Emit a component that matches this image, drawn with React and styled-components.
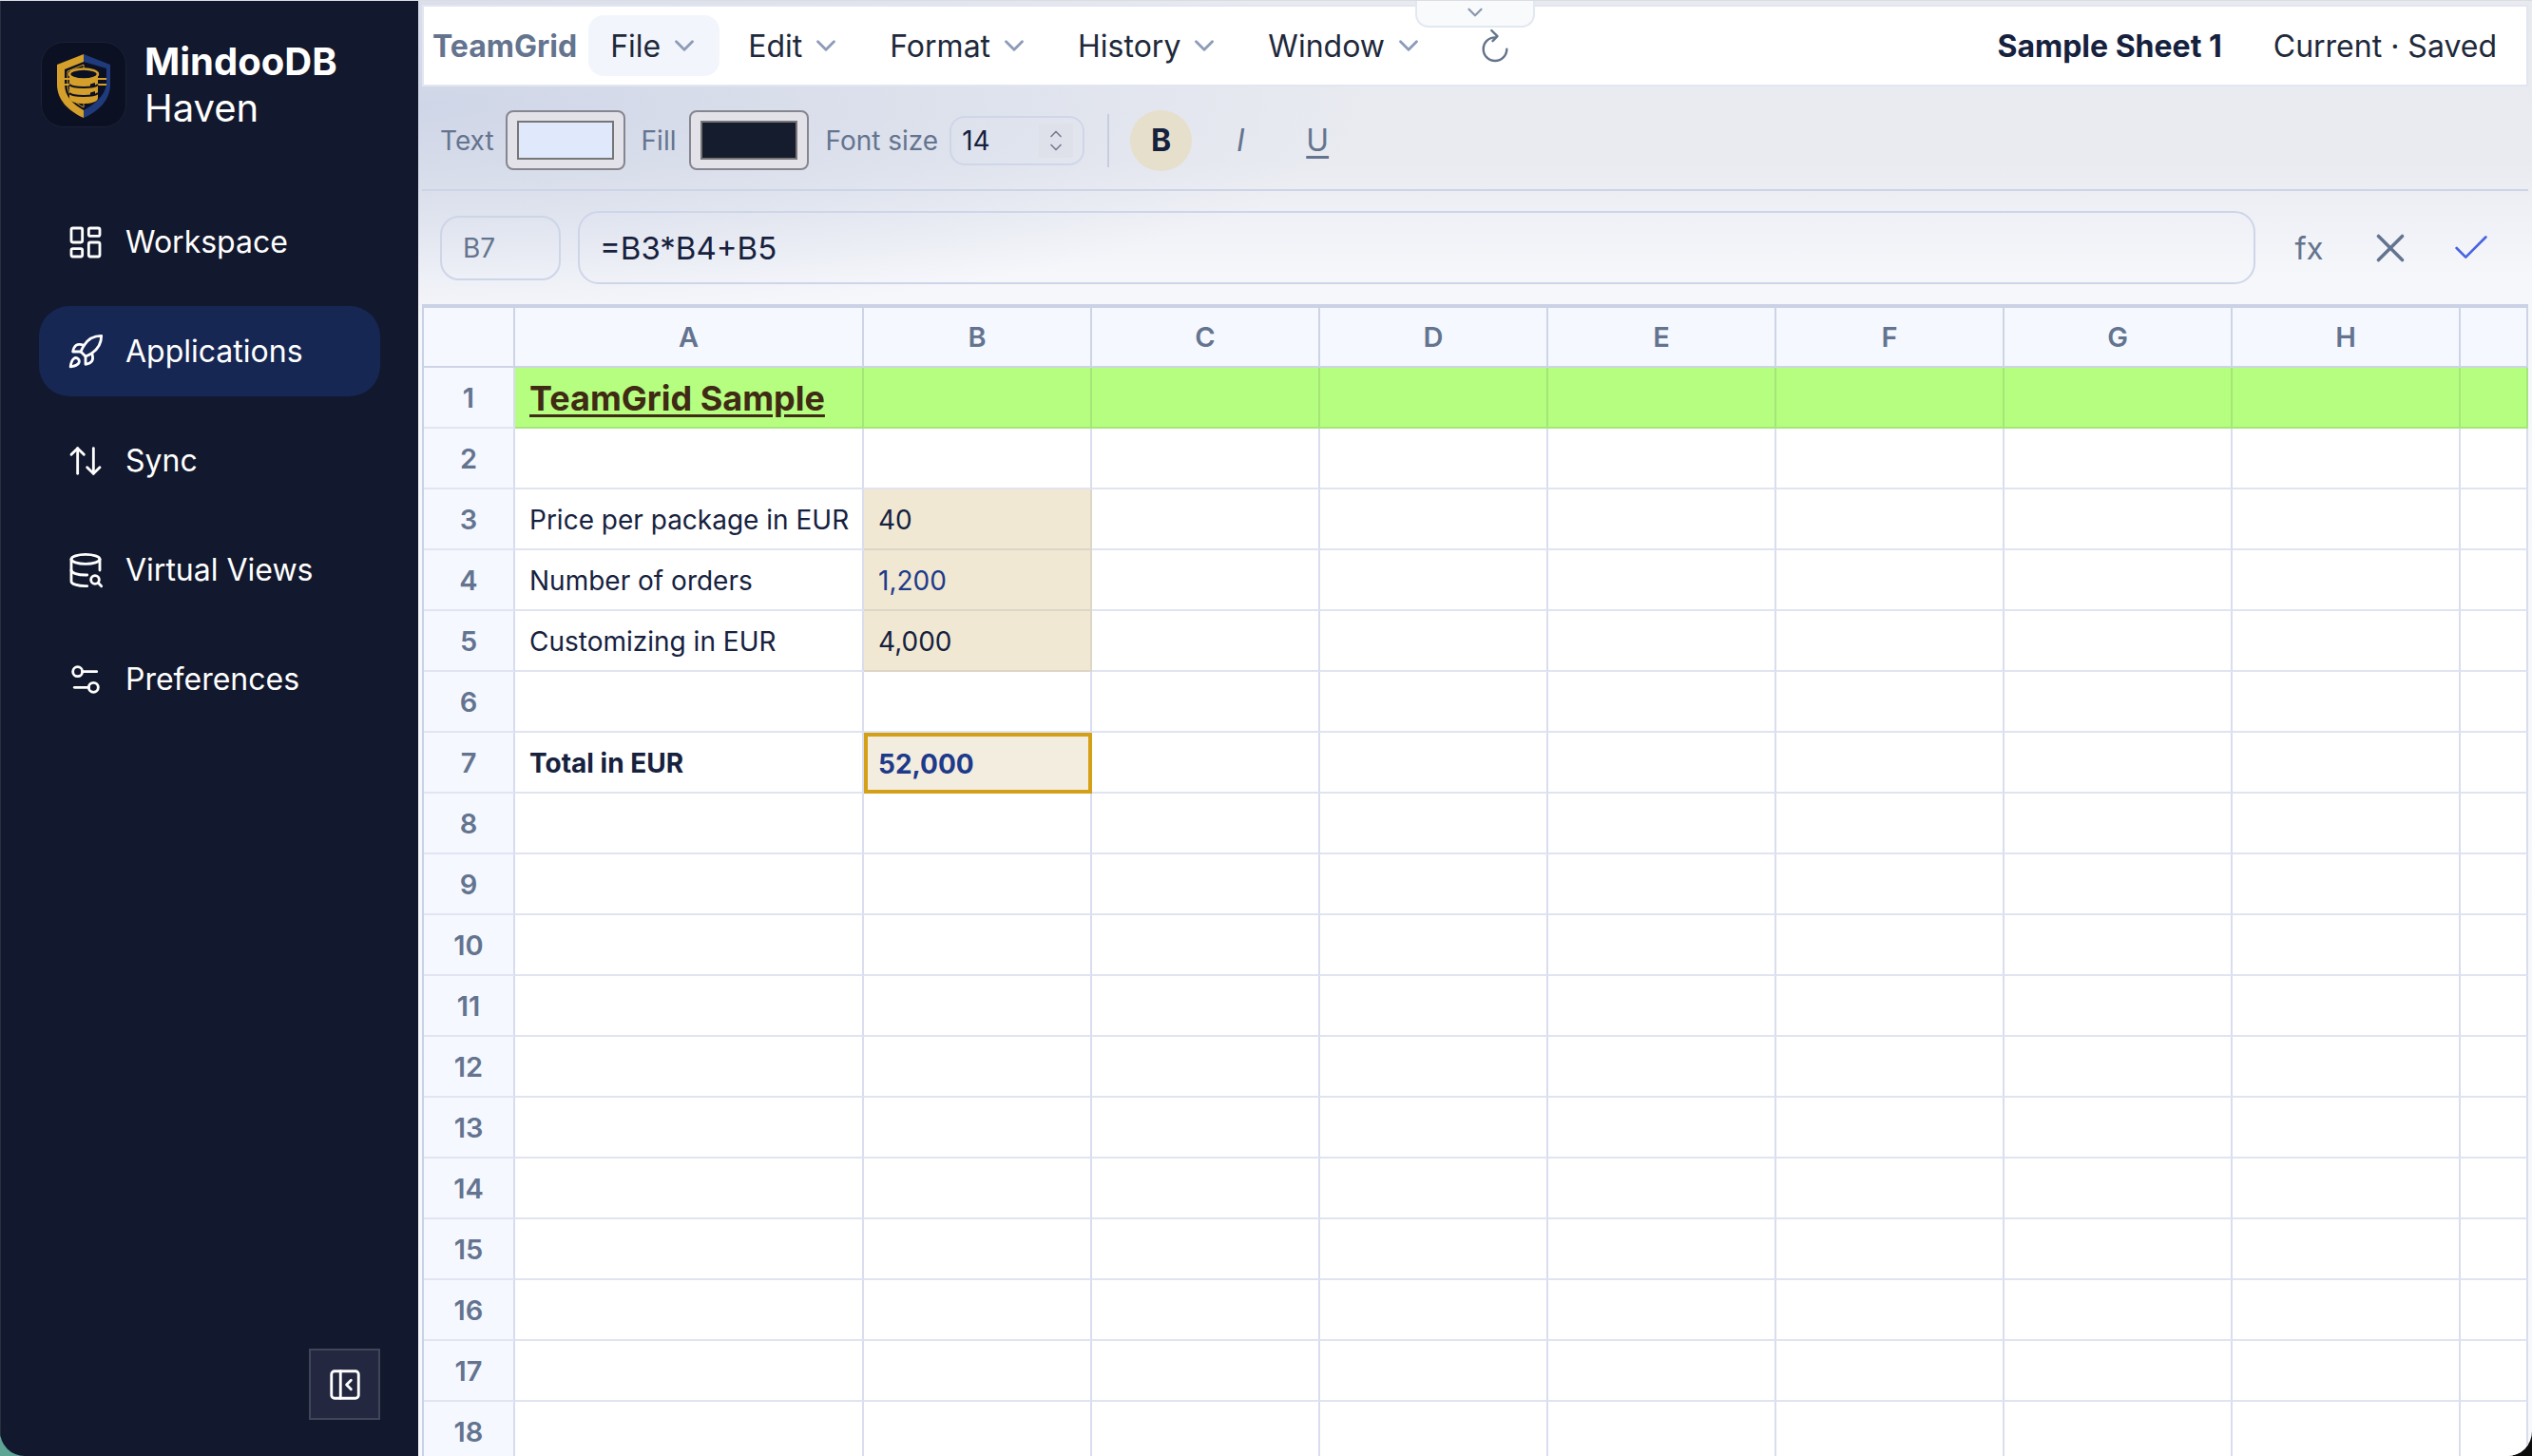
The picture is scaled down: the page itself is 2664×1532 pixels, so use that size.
import React from 'react'
import styled, { createGlobalStyle } from 'styled-components'
import {
  LayoutDashboard,
  Rocket,
  ArrowUpDown,
  Settings2,
  PanelLeftClose,
  ChevronDown,
  ChevronUp,
  X,
  Check,
} from 'lucide-react'

const GlobalStyle = createGlobalStyle`
  html, body { margin: 0; padding: 0; }
  body {
    width: 2664px;
    height: 1532px;
    overflow: hidden;
    font-family: Inter, "Noto Sans", sans-serif;
    background: linear-gradient(90deg, #5fa596 0 50%, #0c0c0c 50% 100%);
  }
  * { box-sizing: border-box; }
`

const Shell = styled.div`
  display: flex;
  width: 2664px;
  height: 1532px;
  border-top: 1px solid #dcdde3;
  border-radius: 0 0 26px 26px;
  overflow: hidden;
`

const Sidebar = styled.aside`
  display: flex;
  flex-direction: column;
  flex: 0 0 440px;
  padding: 39px 40px 38px;
  background: #12182d;
  border-left: 1px solid #2a3044;
  color: #fff;
`

const Brand = styled.div`
  display: flex;
  align-items: center;
  gap: 19px;
  margin: 0 0 69px 2px;
`

const LogoBox = styled.div`
  flex: 0 0 90px;
  width: 90px;
  height: 90px;
  border-radius: 24px;
  background: #0b1022;
  border: 1px solid #1b2136;
  svg { display: block; }
`

const BrandText = styled.div`
  display: flex;
  flex-direction: column;
  font-size: 40px;
  line-height: 49px;
  strong { font-weight: 700; }
  span { font-weight: 400; }
`

const Nav = styled.nav`
  display: flex;
  flex-direction: column;
  gap: 20px;
`

const NavItem = styled.div`
  display: flex;
  align-items: center;
  gap: 22px;
  height: 95px;
  padding-left: 29px;
  border-radius: 32px;
  font-size: 32px;
  font-weight: 400;
  background: ${(p) => (p.$active ? '#172753' : 'transparent')};
`

const CollapseButton = styled.button`
  display: flex;
  align-items: center;
  justify-content: center;
  align-self: flex-end;
  width: 75px;
  height: 75px;
  margin-top: auto;
  padding: 0;
  background: #232840;
  border: 2px solid #41455a;
  color: #fff;
`

const Main = styled.main`
  position: relative;
  display: flex;
  flex-direction: column;
  flex: 1;
  min-width: 0;
  padding: 4px 4px 0;
  background:
    radial-gradient(ellipse 1000px 230px at 0% 110px, #cfd6e7 0%, rgba(207, 214, 231, 0) 100%),
    linear-gradient(180deg, #e8eaf0 0, #e9ebf1 170px, #f6f7fb 290px, #f6f8fc 100%);
`

const DropTab = styled.div`
  position: absolute;
  top: -1px;
  left: 50%;
  display: flex;
  justify-content: center;
  width: 126px;
  height: 29px;
  transform: translateX(-50%);
  background: #f8fafc;
  border: 2px solid #e2e8f0;
  border-top: none;
  border-radius: 0 0 14px 14px;
  color: #8a97ad;
  z-index: 2;
`

const TopBar = styled.header`
  display: flex;
  align-items: center;
  flex: 0 0 86px;
  padding: 0 31px 0 9px;
  background: #fff;
  border: 2px solid #e2e6f0;
`

const AppName = styled.span`
  margin-right: 12px;
  font-size: 32px;
  font-weight: 700;
  color: #64748f;
`

const MenuButton = styled.div`
  display: flex;
  align-items: center;
  gap: 8px;
  height: 64px;
  margin-right: 7px;
  padding: 0 20px 0 23px;
  border-radius: 16px;
  font-size: 32px;
  color: #1e293b;
  background: ${(p) => (p.$open ? '#f2f5fb' : 'transparent')};
  svg { color: #8d9cb8; }
`

const ReloadButton = styled.div`
  display: flex;
  align-items: center;
  justify-content: center;
  width: 94px;
  color: #64748b;
`

const DocTitle = styled.span`
  margin-left: auto;
  font-size: 32px;
  font-weight: 700;
  color: #16213e;
`

const DocStatus = styled.span`
  margin-left: 54px;
  font-size: 32px;
  color: #1e293b;
`

const Toolbar = styled.div`
  display: flex;
  align-items: center;
  flex: 0 0 110px;
  padding: 5px 0 0 19px;
  border-bottom: 2px solid #cdd4e6;
`

const ToolLabel = styled.label`
  margin-right: ${(p) => p.$gap}px;
  font-size: 28px;
  color: #64748f;
`

const ColorInput = styled.input`
  appearance: none;
  width: 126px;
  height: 63px;
  margin: 0 17px 0 0;
  padding: 9px 10px;
  background: #e2e2e8;
  border: 2px solid #85868f;
  border-radius: 8px;
  &::-webkit-color-swatch-wrapper { padding: 0; }
  &::-webkit-color-swatch {
    border: 2px solid #767676;
    border-radius: 0;
  }
`

const SizeField = styled.div`
  display: flex;
  align-items: center;
  justify-content: space-between;
  width: 142px;
  height: 52px;
  padding: 0 10px 0 11px;
  border: 2px solid #ced6e8;
  border-radius: 16px;
  font-size: 28px;
  color: #16213e;
`

const Spinner = styled.div`
  display: flex;
  flex-direction: column;
  align-items: center;
  justify-content: center;
  width: 36px;
  height: 36px;
  background: #dfe1ea;
  color: #747c8f;
  svg { display: block; margin: -3px 0; }
`

const ToolDivider = styled.div`
  width: 2px;
  height: 56px;
  margin: 0 22px 0 24px;
  background: #c6cede;
`

const StyleButton = styled.div`
  display: flex;
  align-items: center;
  justify-content: center;
  width: ${(p) => p.$w || 65}px;
  height: 64px;
  margin-right: 17px;
  border-radius: 50%;
  font-size: 32px;
  color: #64748f;
  background: ${(p) => (p.$on ? '#e5dfcb' : 'transparent')};
  ${(p) => p.$on && 'color: #16213e; font-weight: 700;'}
  ${(p) => p.$italic && 'font-style: italic;'}
  ${(p) => p.$underline && 'text-decoration: underline; text-underline-offset: 5px;'}
`

const FormulaRow = styled.div`
  display: flex;
  align-items: center;
  flex: 0 0 119px;
  padding: 0 18px 0 19px;
`

const NameBox = styled.div`
  display: flex;
  align-items: center;
  flex: 0 0 127px;
  height: 68px;
  margin-right: 18px;
  padding-left: 22px;
  border: 2px solid #cdd5e8;
  border-radius: 20px;
  font-size: 28px;
  color: #64748f;
`

const FormulaInput = styled.div`
  display: flex;
  align-items: center;
  flex: 1;
  height: 77px;
  margin-right: 14px;
  padding-left: 21px;
  border: 2px solid #cdd5e8;
  border-radius: 22px;
  font-size: 33px;
  color: #16213e;
`

const FormulaTool = styled.div`
  display: flex;
  align-items: center;
  justify-content: center;
  flex: 0 0 85px;
  font-size: 33px;
  color: ${(p) => p.$color || '#64748f'};
`

const Sheet = styled.div`
  display: grid;
  flex: 1;
  min-height: 0;
  grid-template-columns: 96px 367px repeat(7, 240px) 1fr;
  grid-auto-rows: 64px;
  grid-template-rows: 63px;
  overflow: hidden;
  background: #fff;
  border-top: 4px solid #cbd2e6;
  border-left: 2px solid #c9d1e5;
`

const HeadCell = styled.div`
  display: flex;
  align-items: center;
  justify-content: center;
  background: #f5f8ff;
  border-right: 2px solid ${(p) => p.$strong ? '#cdd4e6' : '#d8dcee'};
  border-bottom: 2px solid ${(p) => p.$strong ? '#cdd4e6' : '#e1e5f2'};
  font-size: 29px;
  font-weight: 600;
  color: #64748f;
`

const Cell = styled.div`
  display: flex;
  align-items: center;
  min-width: 0;
  padding: 1px 0 0 15px;
  white-space: nowrap;
  font-size: 28px;
  color: ${(p) => p.$color || '#16213e'};
  font-weight: ${(p) => (p.$bold ? 700 : 400)};
  background: ${(p) => p.$fill || 'transparent'};
  border-right: 2px solid ${(p) => p.$line || '#d9ddee'};
  border-bottom: 2px solid ${(p) => p.$line || '#e0e4f1'};
`

const SelectedCell = styled(Cell)`
  padding-left: 11px;
  background: #f3ede0;
  border: 4px solid #d4a017;
`

const SheetTitle = styled.span`
  font-size: 36px;
  font-weight: 700;
  color: #3f2a14;
  text-decoration: underline;
  text-decoration-thickness: 3px;
  text-underline-offset: 4px;
`

function Logo() {
  return (
    <svg width="88" height="88" viewBox="0 0 88 88">
      <path d="M44 12 L72 23 V44 C72 60 60 72 44 79 Z" fill="#1f3b7c" />
      <path d="M44 12 L16 23 V44 C16 60 28 72 44 79 Z" fill="#d49f2a" />
      <path d="M44 20 L24 28 V44 C24 56 33 65 44 71 C55 65 66 56 68 44 V27 Z" fill="#0b1022" />
      <path d="M44 23 L27 30 V44 C27 55 34 63 44 68 Z" fill="none" stroke="#d49f2a" strokeWidth="1" />
      <path d="M24 38 H68 M24 44 H68" stroke="#d49f2a" strokeWidth="2" />
      <path d="M29 34 V58 C29 62 36 64 44 64 C52 64 59 62 59 58 V34 Z" fill="#d49f2a" />
      <ellipse cx="44" cy="33" rx="15" ry="5.5" fill="#0b1022" stroke="#d49f2a" strokeWidth="2.5" />
      <path d="M29 44 C33 48 55 48 59 44 M29 53 C33 57 55 57 59 53" fill="none" stroke="#0b1022" strokeWidth="2" />
      <path d="M51 43.5 L56 42 V45 L51 46.5 Z M51 52.5 L56 51 V54 L51 55.5 Z" fill="#0b1022" />
    </svg>
  )
}

function ReloadIcon() {
  return (
    <svg width="32" height="38" viewBox="0 0 26 30" fill="none" stroke="currentColor" strokeWidth="2" strokeLinecap="round" strokeLinejoin="round">
      <path d="M13 8 A10 10 0 1 0 23 18" />
      <path d="M10 2 L15 7 L11 11" />
    </svg>
  )
}

// lucide has no database with a loupe in this version
function DatabaseLoupe({ size, strokeWidth }) {
  return (
    <svg width={size} height={size} viewBox="0 0 24 24" fill="none" stroke="currentColor" strokeWidth={strokeWidth} strokeLinecap="round" strokeLinejoin="round">
      <ellipse cx="12" cy="5" rx="9" ry="3" />
      <path d="M21 5v7" />
      <path d="M3 5v14c0 1.66 4 3 9 3h1" />
      <path d="M3 12c0 1.66 4 3 9 3h1" />
      <circle cx="18" cy="18" r="2.6" />
      <path d="m20 20 2 2" />
    </svg>
  )
}

const NAV = [
  { label: 'Workspace', Icon: LayoutDashboard },
  { label: 'Applications', Icon: Rocket, active: true },
  { label: 'Sync', Icon: ArrowUpDown },
  { label: 'Virtual Views', Icon: DatabaseLoupe },
  { label: 'Preferences', Icon: Settings2 },
]

const MENUS = ['File', 'Edit', 'Format', 'History', 'Window']
const COLUMNS = ['A', 'B', 'C', 'D', 'E', 'F', 'G', 'H', '']
const TAN = '#f0e8d3'
const TAN_LINE = '#ddd6c6'

const ROWS = {
  3: { a: 'Price per package in EUR', b: '40', fill: TAN },
  4: { a: 'Number of orders', b: '1,200', fill: TAN, color: '#1e3a8a' },
  5: { a: 'Customizing in EUR', b: '4,000', fill: TAN },
}

function SheetRow({ n }) {
  const data = ROWS[n] || {}
  const green = n === 1
  const selected = n === 7
  const line = green ? '#a4e678' : undefined
  return (
    <>
      <HeadCell>{n}</HeadCell>
      {COLUMNS.map((col, i) => {
        if (selected && i === 1) {
          return <SelectedCell key={i} $bold $color="#1e3a8a">52,000</SelectedCell>
        }
        let text = null
        if (i === 0) text = green ? <SheetTitle>TeamGrid Sample</SheetTitle> : selected ? 'Total in EUR' : data.a
        if (i === 1) text = data.b
        return (
          <Cell
            key={i}
            $fill={green ? '#b6fe80' : i === 1 ? data.fill : undefined}
            $line={line || (i === 1 && data.fill ? TAN_LINE : undefined)}
            $color={i === 1 ? data.color : undefined}
            $bold={selected && i === 0}
          >
            {text}
          </Cell>
        )
      })}
    </>
  )
}

export default function App() {
  return (
    <>
      <GlobalStyle />
      <Shell>
        <Sidebar>
          <Brand>
            <LogoBox><Logo /></LogoBox>
            <BrandText>
              <strong>MindooDB</strong>
              <span>Haven</span>
            </BrandText>
          </Brand>
          <Nav>
            {NAV.map(({ label, Icon, active }) => (
              <NavItem key={label} $active={active}>
                <Icon size={40} strokeWidth={1.7} />
                {label}
              </NavItem>
            ))}
          </Nav>
          <CollapseButton><PanelLeftClose size={38} strokeWidth={1.8} /></CollapseButton>
        </Sidebar>

        <Main>
          <DropTab><ChevronDown size={26} strokeWidth={2} /></DropTab>
          <TopBar>
            <AppName>TeamGrid</AppName>
            {MENUS.map((m) => (
              <MenuButton key={m} $open={m === 'File'}>
                {m}
                <ChevronDown size={34} strokeWidth={2} />
              </MenuButton>
            ))}
            <ReloadButton><ReloadIcon /></ReloadButton>
            <DocTitle>Sample Sheet 1</DocTitle>
            <DocStatus>Current · Saved</DocStatus>
          </TopBar>

          <Toolbar>
            <ToolLabel $gap={12}>Text</ToolLabel>
            <ColorInput type="color" defaultValue="#e0e8fb" />
            <ToolLabel $gap={14}>Fill</ToolLabel>
            <ColorInput type="color" defaultValue="#151c2e" />
            <ToolLabel $gap={12}>Font size</ToolLabel>
            <SizeField>
              14
              <Spinner>
                <ChevronUp size={20} strokeWidth={2} />
                <ChevronDown size={20} strokeWidth={2} />
              </Spinner>
            </SizeField>
            <ToolDivider />
            <StyleButton $on>B</StyleButton>
            <StyleButton $w={68} $italic>I</StyleButton>
            <StyleButton $w={60} $underline>U</StyleButton>
          </Toolbar>

          <FormulaRow>
            <NameBox>B7</NameBox>
            <FormulaInput>=B3*B4+B5</FormulaInput>
            <FormulaTool>fx</FormulaTool>
            <FormulaTool><X size={50} strokeWidth={1.7} /></FormulaTool>
            <FormulaTool $color="#4a63e0"><Check size={46} strokeWidth={1.4} /></FormulaTool>
          </FormulaRow>

          <Sheet>
            <HeadCell $strong />
            {COLUMNS.map((c, i) => <HeadCell key={i} $strong>{c}</HeadCell>)}
            {Array.from({ length: 18 }, (_, i) => <SheetRow key={i} n={i + 1} />)}
          </Sheet>
        </Main>
      </Shell>
    </>
  )
}
